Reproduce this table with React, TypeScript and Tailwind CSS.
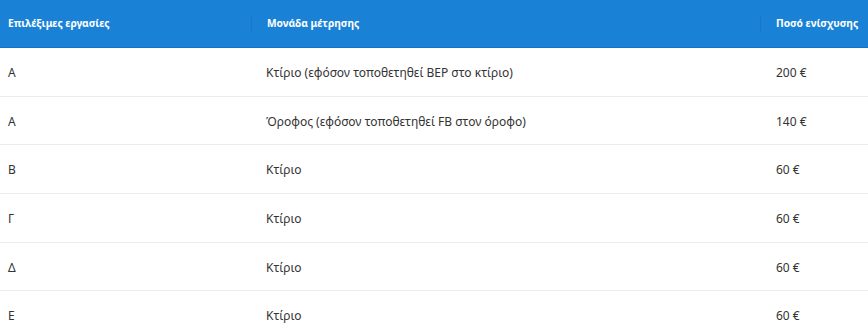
import React from "react";

const rows = [
  ["Α", "Κτίριο (εφόσον τοποθετηθεί ΒΕΡ στο κτίριο)", "200 €"],
  ["Α", "Όροφος (εφόσον τοποθετηθεί FB στον όροφο)", "140 €"],
  ["Β", "Κτίριο", "60 €"],
  ["Γ", "Κτίριο", "60 €"],
  ["Δ", "Κτίριο", "60 €"],
  ["Ε", "Κτίριο", "60 €"],
];

export default function App() {
  return (
    <div
      className="w-[868px] h-[335px] overflow-hidden bg-white text-[#333333]"
      style={{ fontFamily: '"Noto Sans", "Open Sans", sans-serif' }}
    >
      <div className="grid grid-cols-[251px_509px_1fr] h-[48px] bg-[#1a82d6] border-b border-[#1672c2] text-white text-[10.2px] font-bold items-center pt-[1px]">
        <div className="pl-2">Επιλέξιμες εργασίες</div>
        <div className="pl-[15px] border-l border-[#1877c8] h-[18px] flex items-center">Μονάδα μέτρησης</div>
        <div className="pl-[15px] border-l border-[#1877c8] h-[18px] flex items-center">Ποσό ενίσχυσης</div>
      </div>
      {rows.map((r, i) => (
        <div
          key={i}
          className="grid grid-cols-[251px_509px_1fr] h-[48.7px] border-b border-[#ededed] text-[12px] items-center pt-[2px]"
        >
          <div className="pl-2">{r[0]}</div>
          <div className="pl-[15px]">{r[1]}</div>
          <div className="pl-[16px]">{r[2]}</div>
        </div>
      ))}
    </div>
  );
}
